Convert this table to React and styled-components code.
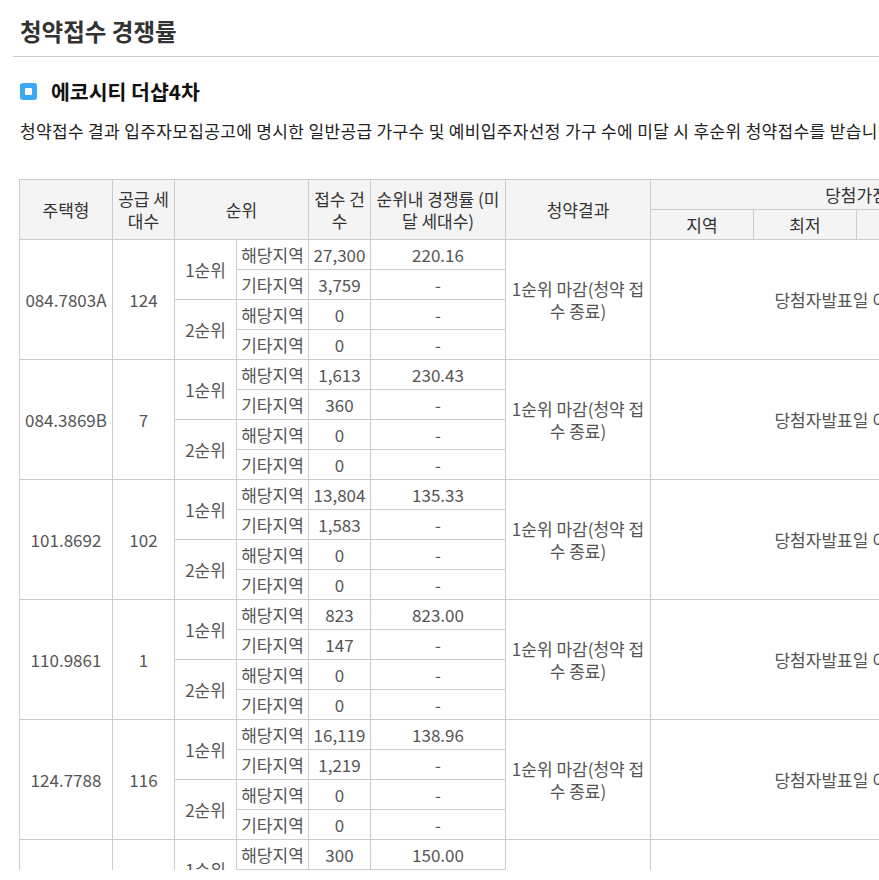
import React from "react";
import styled, { createGlobalStyle } from "styled-components";

const GlobalStyle = createGlobalStyle`
  *{
    margin:0;
    padding:0;
    box-sizing:border-box;
  }
  html, body{
    overflow:hidden;
    background:#fff;
  }
  body{
    font-family: "Noto Sans CJK KR", "Noto Sans", sans-serif;
  }
`;

const Page = styled.div`
  width: 100vw;
  height: 870px;
  overflow: hidden;
`;

const Content = styled.div`
  width: 1100px;
  padding-left: 13px;
`;

const Title = styled.h1`
  font-size: 23.5px;
  font-weight: 700;
  line-height: 36px;
  color: #333;
  padding: 13px 7px 7px;
  border-bottom: 1px solid #ccc;
`;

const Section = styled.section`
  padding-left: 6px;
`;

const SubTitle = styled.h2`
  display: flex;
  align-items: center;
  gap: 14px;
  margin-top: 16px;
  padding-left: 1px;
  font-size: 20.5px;
  font-weight: 700;
  line-height: 36px;
  color: #111;
`;

const Bullet = styled.span`
  width: 17px;
  height: 17px;
  border-radius: 3px;
  background: #3aa8f5;
  display: flex;
  align-items: center;
  justify-content: center;
  &::after{
    content: "";
    width: 7px;
    height: 7px;
    border-radius: 1px;
    background: #fff;
  }
`;

const Desc = styled.p`
  margin-top: 10px;
  padding-left: 1px;
  font-size: 17px;
  letter-spacing: 0.35px;
  line-height: 24px;
  color: #222;
  white-space: nowrap;
`;

const Table = styled.table`
  margin-top: 36px;
  border-collapse: collapse;
  table-layout: fixed;
  width: 1043px;
  font-size: 17px;
  line-height: 22px;
`;

const Th = styled.th`
  background: #f4f4f4;
  border: 1px solid #ccc;
  color: #333;
  font-weight: 400;
  height: 30px;
  padding: 3px 2px;
  text-align: center;
  vertical-align: middle;
`;

const Td = styled.td`
  border: 1px solid #ccc;
  color: #555;
  height: 30px;
  padding: 0 2px;
  text-align: center;
  vertical-align: middle;
  white-space: ${(p) => (p.$wrap ? "normal" : "nowrap")};
`;

const widths = [93, 62, 62, 72, 62, 135, 145, 103, 103, 103, 103];

const groups = [
  { type: "084.7803A", supply: "124", counts: ["27,300", "3,759", "0", "0"], rate: "220.16" },
  { type: "084.3869B", supply: "7", counts: ["1,613", "360", "0", "0"], rate: "230.43" },
  { type: "101.8692", supply: "102", counts: ["13,804", "1,583", "0", "0"], rate: "135.33" },
  { type: "110.9861", supply: "1", counts: ["823", "147", "0", "0"], rate: "823.00" },
  { type: "124.7788", supply: "116", counts: ["16,119", "1,219", "0", "0"], rate: "138.96" },
  { type: "124.7615", supply: "2", counts: ["300", "27", "0", "0"], rate: "150.00" },
];

const areas = ["해당지역", "기타지역", "해당지역", "기타지역"];

function Group({ g }) {
  return (
    <>
      {areas.map((area, i) => (
        <tr key={i}>
          {i === 0 && <Td rowSpan={4}>{g.type}</Td>}
          {i === 0 && <Td rowSpan={4}>{g.supply}</Td>}
          {i % 2 === 0 && <Td rowSpan={2}>{i === 0 ? "1순위" : "2순위"}</Td>}
          <Td>{area}</Td>
          <Td>{g.counts[i]}</Td>
          <Td>{i === 0 ? g.rate : "-"}</Td>
          {i === 0 && (
            <Td rowSpan={4} $wrap>
              1순위 마감(청약 접수 종료)
            </Td>
          )}
          {i === 0 && (
            <Td rowSpan={4} colSpan={4}>
              당첨자발표일 이후 공개
            </Td>
          )}
        </tr>
      ))}
    </>
  );
}

function App() {
  return (
    <Page>
      <GlobalStyle />
      <Content>
        <Title>청약접수 경쟁률</Title>
        <Section>
          <SubTitle>
            <Bullet />
            에코시티 더샵4차
          </SubTitle>
          <Desc>
            청약접수 결과 입주자모집공고에 명시한 일반공급 가구수 및 예비입주자선정 가구 수에 미달 시 후순위 청약접수를 받습니다.
          </Desc>
          <Table>
            <colgroup>
              {widths.map((w, i) => (
                <col key={i} style={{ width: w }} />
              ))}
            </colgroup>
            <thead>
              <tr>
                <Th rowSpan={2}>주택형</Th>
                <Th rowSpan={2}>공급 세대수</Th>
                <Th rowSpan={2} colSpan={2}>순위</Th>
                <Th rowSpan={2}>접수 건수</Th>
                <Th rowSpan={2}>순위내 경쟁률 (미달 세대수)</Th>
                <Th rowSpan={2}>청약결과</Th>
                <Th colSpan={4}>당첨가점</Th>
              </tr>
              <tr>
                <Th>지역</Th>
                <Th>최저</Th>
                <Th>최고</Th>
                <Th>평균</Th>
              </tr>
            </thead>
            <tbody>
              {groups.map((g, i) => (
                <Group key={i} g={g} />
              ))}
            </tbody>
          </Table>
        </Section>
      </Content>
    </Page>
  );
}

export default App;
